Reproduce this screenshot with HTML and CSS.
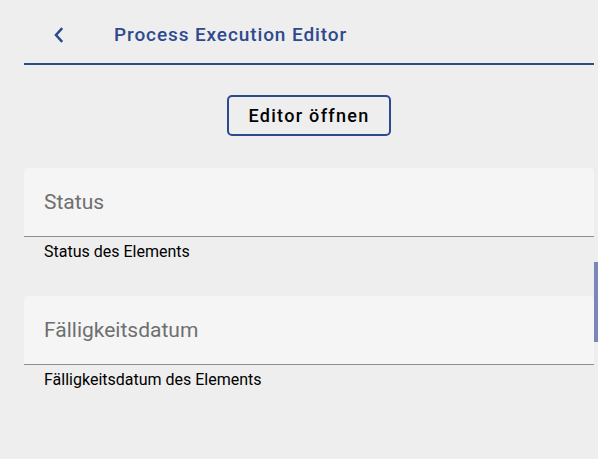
FILE: index.html
```html
<!DOCTYPE html>
<html lang="de">
<head>
<meta charset="utf-8">
<title>Process Execution Editor</title>
<link rel="stylesheet" href="styles.css">
</head>
<body>
<div class="page">
  <header class="header">
    <button class="back" aria-label="Zurück">
      <svg width="11" height="16" viewBox="0 0 11 16"><path d="M9.2 1.2 L3 8 L9.2 14.8" fill="none" stroke="#2e4a8f" stroke-width="2.5"/></svg>
    </button>
    <h1 class="title">Process Execution Editor</h1>
  </header>
  <div class="actions">
    <button class="btn-outline">Editor öffnen</button>
  </div>
  <section class="field">
    <div class="field-box"><span class="field-label">Status</span></div>
    <p class="field-hint">Status des Elements</p>
  </section>
  <section class="field">
    <div class="field-box"><span class="field-label">Fälligkeitsdatum</span></div>
    <p class="field-hint">Fälligkeitsdatum des Elements</p>
  </section>
</div>
<div class="scrollbar"></div>
</body>
</html>
```

FILE: styles.css
```css
html, body {
  margin: 0;
  padding: 0;
  background: #eeeeee;
  font-family: Roboto, "Noto Sans", Arial, sans-serif;
  height: 100%;
  overflow: hidden;
}
.page {
  padding: 0 4px 0 24px;
}
.header {
  height: 65px;
  border-bottom: 2px solid #2e4a8f;
  display: flex;
  align-items: center;
  padding-left: 29px;
  padding-top: 6px;
  box-sizing: border-box;
}
.back {
  background: none;
  border: 0;
  padding: 0;
  width: 12px;
  height: 16px;
  display: flex;
  align-items: center;
  cursor: pointer;
}
.title {
  margin: 0 0 0 49px;
  font-size: 19px;
  font-weight: 500;
  letter-spacing: 0.9px;
  color: #2e4a8f;
}
.actions {
  display: flex;
  justify-content: center;
  margin-top: 30px;
}
.btn-outline {
  width: 164px;
  height: 41px;
  border: 2px solid #2e4a8f;
  border-radius: 5px;
  background: transparent;
  font-family: Roboto, "Noto Sans", Arial, sans-serif;
  font-size: 18px;
  font-weight: 500;
  letter-spacing: 1.3px;
  color: #000;
  padding: 0;
}
.field {
  margin-top: 32px;
}
.field + .field {
  margin-top: 34px;
}
.field-box {
  background: #f5f5f5;
  border-radius: 4px 4px 0 0;
  border-bottom: 1px solid #8c8c8c;
  padding: 22px 20px 0;
  height: 46px;
}
.field-label {
  display: block;
  font-size: 21px;
  line-height: 24px;
  color: #6f6f6f;
}
.field-hint {
  margin: 0;
  padding: 5px 20px 0;
  font-size: 16px;
  line-height: 20px;
  color: #000;
}
.scrollbar {
  position: fixed;
  right: 0;
  top: 262px;
  width: 4px;
  height: 80px;
  background: #7c87b9;
}
```
